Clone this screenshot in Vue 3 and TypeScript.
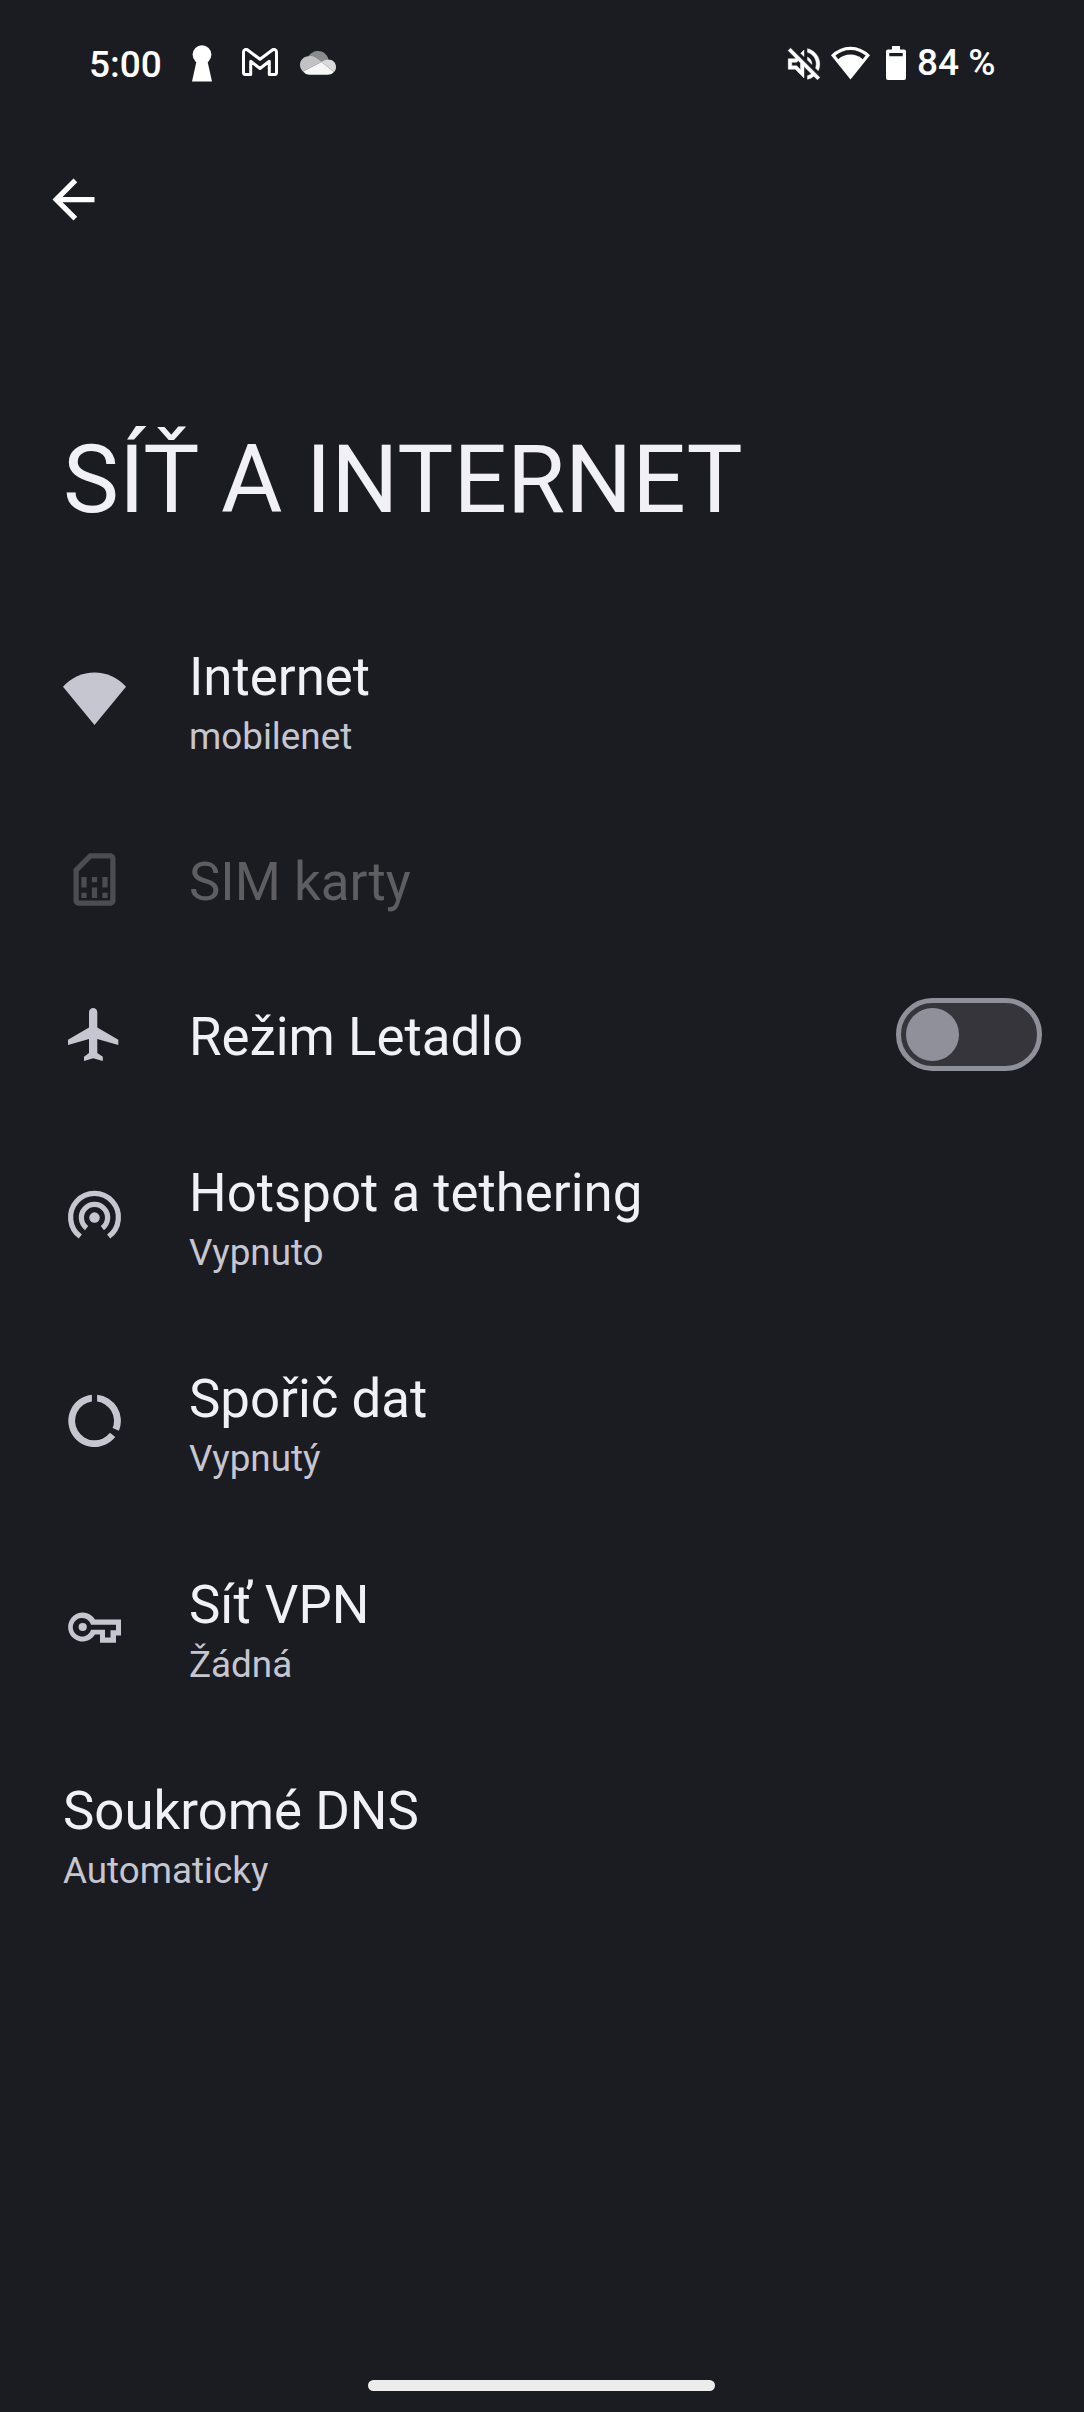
<script setup lang="ts">
interface Item {
  id: string
  title: string
  summary?: string
  icon?: 'wifi' | 'sim' | 'plane' | 'hotspot' | 'data' | 'key'
  disabled?: boolean
  toggle?: boolean
}

const items: Item[] = [
  { id: 'internet', title: 'Internet', summary: 'mobilenet', icon: 'wifi' },
  { id: 'sim', title: 'SIM karty', icon: 'sim', disabled: true },
  { id: 'airplane', title: 'Režim Letadlo', icon: 'plane', toggle: true },
  { id: 'hotspot', title: 'Hotspot a tethering', summary: 'Vypnuto', icon: 'hotspot' },
  { id: 'saver', title: 'Spořič dat', summary: 'Vypnutý', icon: 'data' },
  { id: 'vpn', title: 'Síť VPN', summary: 'Žádná', icon: 'key' },
  { id: 'dns', title: 'Soukromé DNS', summary: 'Automaticky' },
]
</script>

<template>
  <div class="screen">
    <header class="status">
      <div class="status-left">
        <span class="clock">5:00</span>
        <svg class="keyhole" width="20" height="37" viewBox="0 0 20 37">
          <circle cx="10" cy="9.6" r="9.4" />
          <path d="M5 14H15L20 36.5H0Z" />
        </svg>
        <svg class="mail" width="36" height="28" viewBox="0 0 36 28">
          <path
            d="M1.5 4.2C1.5 1.5 4 .7 6 2.2L18 11.3 30 2.2C32 .7 34.5 1.5 34.5 4.2V24.5Q34.5 26.5 32.5 26.5H27.3V13.3L18 20.5 8.7 13.3V26.5H3.5Q1.5 26.5 1.5 24.5Z"
            fill="none" stroke="#fff" stroke-width="3" stroke-linejoin="round"
          />
        </svg>
        <svg class="cloud" width="36" height="24" viewBox="0 0 36 24">
          <path d="M8 6C11 1 15 0 18 0C23 0 27 3 28.5 8.5L22 12Z" fill="#8b8b8e" />
          <path d="M8.5 5.2C13 4.6 16 6.4 21.5 11L3 20.5C1 18.500 0 16.500 0 14C0 9 3.500 5.500 8.500 5.200Z" fill="#c2c2c4" />
          <path d="M21.500 11Q24 8.500 28 8.500C33 8.500 36 12 36 16C36 18 35.300 19.600 34 21Z" fill="#d9d9da" />
          <path d="M3 20.500L21.500 11L34 21Q32 23.700 28 23.700H9Q5.500 23.700 3 20.500Z" fill="#f6f6f6" />
        </svg>
      </div>
      <div class="status-right">
        <svg class="mute" width="42" height="42" viewBox="0 0 24 24">
          <path
            d="M4.340 2.930L2.930 4.340 7.290 8.700 7 9H3v6h4l5 5v-6.590l4.180 4.180c-.65.49-1.380.88-2.180 1.110v2.060c1.340-.3 2.570-.92 3.610-1.750l2.050 2.050 1.410-1.410L4.340 2.930zM10 15.170L7.830 13H5v-2h2.830l.88-.88L10 11.410v3.760zM19 12c0 .82-.15 1.610-.41 2.340l1.530 1.530c.56-1.170.88-2.480.88-3.870 0-4.280-2.990-7.860-7-8.770v2.060c2.890.86 5 3.540 5 6.710zm-7-8l-1.880 1.880L12 7.760zm4.500 8c0-1.770-1.020-3.290-2.500-4.030v1.790l2.480 2.480c.01-.08.02-.16.02-.24z"
          />
        </svg>
        <svg class="signal" width="39" height="34" viewBox="0 0 39 34">
          <path fill-rule="evenodd" d="M0 9.200Q8.500 .7 19.500 .7T39 9.200L19.500 33.500ZM4.400 9.600L7.300 13.200Q12.500 8.600 19.500 8.600T31.700 13.200L34.600 9.600Q28 4 19.500 4T4.400 9.600Z" />
        </svg>
        <svg class="battery" width="20" height="34" viewBox="0 0 20 34">
          <path fill-rule="evenodd" d="M6 0H14V3.500H18Q20 3.500 20 5.500V32Q20 34 18 34H2Q0 34 0 32V5.500Q0 3.500 2 3.500H6ZM3.300 7V10.300H16.700V7Z" />
        </svg>
        <span class="percent">84 %</span>
      </div>
    </header>

    <nav class="toolbar">
      <svg width="63" height="63" viewBox="0 0 24 24">
        <path d="M20 11H7.830l5.590-5.590L12 4l-8 8 8 8 1.410-1.410L7.830 13H20v-2z" />
      </svg>
    </nav>

    <h1 class="heading">SÍŤ A INTERNET</h1>

    <main class="list">
      <div
        v-for="item in items"
        :key="item.id"
        class="row"
        :class="{ single: !item.summary, disabled: item.disabled }"
      >
        <div v-if="item.icon" class="icon">
          <svg v-if="item.icon === 'wifi'" viewBox="0 0 63 63">
            <path d="M0 18.800A41.800 41.800 0 0 1 63 18.800L31.500 57Z" />
          </svg>
          <svg v-else-if="item.icon === 'sim'" viewBox="0 0 24 24">
            <path d="M18 2h-8L4 8v12c0 1.100.9 2 2 2h12c1.100 0 2-.9 2-2V4c0-1.100-.9-2-2-2zm0 18H6V8.830L10.830 4H18v16zM7 17h2v2H7zM15 17h2v2h-2zM7 11h2v4H7zM11 15h2v4h-2zM11 11h2v2h-2zM15 11h2v4h-2z" />
          </svg>
          <svg v-else-if="item.icon === 'plane'" viewBox="0 0 63 63">
            <path d="M26 9.200A4.150 4.150 0 0 1 34.300 9.200V24.500L55.300 36.700V41.900L34.300 36V50L39.800 53.800V57.900L30.200 55.200L21 57.900V53.800L26 50V36L5 41.900V36.700L26 24.500Z" />
          </svg>
          <svg v-else-if="item.icon === 'hotspot'" viewBox="0 0 24 24">
            <circle cx="12" cy="12.800" r="2" />
            <g fill="none" stroke="currentColor" stroke-width="2">
              <path d="M9 16.800A5 5 0 1 1 15 16.800" />
              <path d="M6.600 20A9.100 9.100 0 1 1 17.400 20" />
            </g>
          </svg>
          <svg v-else-if="item.icon === 'data'" viewBox="-12 -11.750 24 24">
            <path d="M1-9.950A10 10 0 0 1 9.300 3.800L6.900 2.750A7.430 7.430 0 0 0 1-7.360Z" />
            <path d="M-1-9.950A10 10 0 1 0 7.900 6.150L5.900 4.550A7.430 7.430 0 1 1-1-7.360Z" />
          </svg>
          <svg v-else viewBox="0 0 63 63">
            <path
              fill-rule="evenodd"
              d="M32 23.500H58V39.500H53V46.800H37V38.600H32A14.500 14.500 0 1 1 32 23.500ZM28 28.700A9.300 9.300 0 1 0 28 33.800H42V41.600H47.500V34.200H53V28.700Z"
            />
            <circle cx="19.700" cy="31" r="4.100" />
          </svg>
        </div>
        <div class="text">
          <div class="title">{{ item.title }}</div>
          <div v-if="item.summary" class="summary">{{ item.summary }}</div>
        </div>
        <div v-if="item.toggle" class="switch"><span class="thumb"></span></div>
      </div>
    </main>

    <footer class="gesture"><span></span></footer>
  </div>
</template>

<style>
body {
  background: #1b1c21;
}
</style>

<style scoped>
.screen {
  box-sizing: border-box;
  width: 1084px;
  height: 2412px;
  display: flex;
  flex-direction: column;
  overflow: hidden;
  background: #1b1c21;
  color: #f1f0f7;
  font-family: Roboto, "Noto Sans", sans-serif;
}
svg {
  display: block;
  flex: none;
  fill: currentColor;
}
.status {
  height: 126px;
  flex: none;
  display: flex;
  justify-content: space-between;
  padding: 0 89px 0 89px;
  color: #fff;
  font-size: 37px;
  font-weight: 500;
  line-height: 43px;
}
.status-left,
.status-right {
  display: flex;
  align-items: flex-start;
}
.clock {
  width: 103px;
  margin-top: 43px;
}
.keyhole { margin-top: 44.500px; }
.mail { margin: 48px 0 0 30px; }
.cloud { margin: 51px 0 0 22px; }
.mute {
  margin-top: 43px;
  stroke: currentColor;
  stroke-width: 0.25px;
}
.signal { margin: 45.500px 0 0 6.500px; }
.battery { margin: 46px 0 0 16px; }
.percent {
  width: 78px;
  margin: 41px 0 0 11px;
  white-space: nowrap;
}
.toolbar {
  height: 147px;
  flex: none;
  box-sizing: border-box;
  padding: 42px 0 0 42px;
  color: #fff;
}
.heading {
  margin: 151px 0 0 63px;
  height: 172px;
  font-size: 94.200px;
  font-weight: 400;
  line-height: 112px;
  white-space: nowrap;
}
.list {
  flex: 1;
}
.row {
  height: 206px;
  display: flex;
  align-items: center;
  padding: 0 42px 0 63px;
}
.row.single {
  height: 155px;
}
.icon {
  width: 126px;
  flex: none;
  color: #c6c6d0;
}
.icon svg {
  width: 63px;
  height: 63px;
}
.text {
  flex: 1;
  padding-top: 5px;
}
.title {
  font-size: 52.800px;
  line-height: 62px;
}
.summary {
  margin-top: 7px;
  font-size: 36.800px;
  line-height: 43px;
  color: #c6c6d0;
}
.disabled .title { color: #5d5d62; }
.disabled .icon { color: #4c4c53; }
.switch {
  box-sizing: border-box;
  width: 146px;
  height: 73px;
  padding: 5px;
  border: 5px solid #90909a;
  border-radius: 37px;
  background: #36353b;
}
.thumb {
  display: block;
  width: 53px;
  height: 53px;
  border-radius: 50%;
  background: #90909a;
}
.gesture {
  flex: none;
  display: flex;
  justify-content: center;
  padding: 0 1px 21px 0;
}
.gesture span {
  width: 347px;
  height: 10.700px;
  border-radius: 5.500px;
  background: #ececec;
}
</style>
